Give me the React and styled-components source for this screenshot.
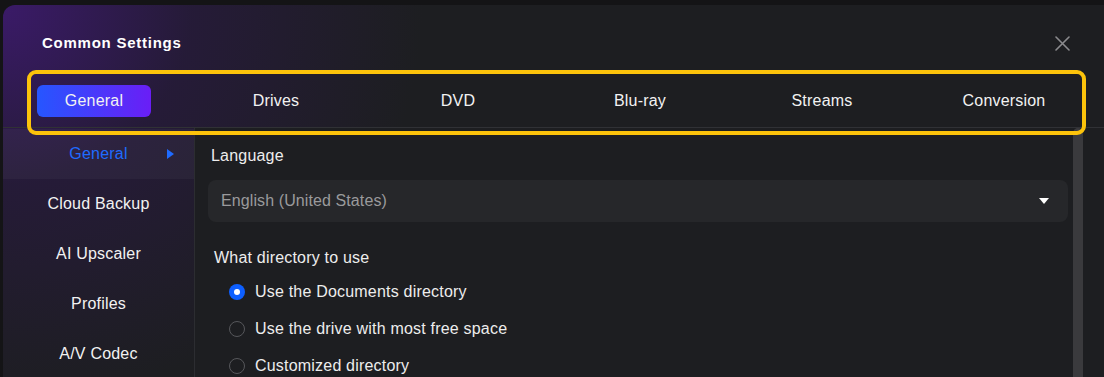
import React from 'react'
import styled, { createGlobalStyle } from 'styled-components'

const GlobalStyle = createGlobalStyle`
    html, body {
        margin: 0;
        padding: 0;
        background: #141416;
        overflow: hidden;
    }
    body {
        font-family: "Liberation Sans", Arial, sans-serif;
    }
`;

const Page = styled.div`
    position: relative;
    display: flex;
    height: 377px;
    padding: 5px 0 0 3px;
    box-sizing: border-box;
`;

const Dialog = styled.div`
    flex: 1;
    display: flex;
    flex-direction: column;
    border-radius: 12px 0 0 0;
    overflow: hidden;
    background-color: #1d1e21;
    background-image: radial-gradient(ellipse 420px 400px at 0% 0%, rgba(60, 26, 108, 0.95) 0%, rgba(44, 24, 74, 0.55) 45%, rgba(29, 30, 33, 0) 100%);
`;

const Header = styled.div`
    height: 69px;
    box-sizing: border-box;
    padding: 7px 34px 0 39px;
    display: flex;
    align-items: center;
    justify-content: space-between;
`;

const Title = styled.h1`
    margin: 0;
    font-size: 15px;
    line-height: 20px;
    font-weight: 700;
    letter-spacing: 0.75px;
    color: #ffffff;
`;

const CloseButton = styled.div`
    width: 15px;
    height: 15px;
    display: flex;
`;

const TabBar = styled.div`
    height: 53px;
    display: grid;
    grid-template-columns: repeat(6, 182px);
    align-items: center;
    border-bottom: 1px solid #303135;
`;

const Tab = styled.div`
    justify-self: center;
    width: 114px;
    height: 32px;
    border-radius: 6px;
    display: flex;
    align-items: center;
    justify-content: center;
    font-size: 16px;
    letter-spacing: 0.2px;
    color: #f2f2f2;
    background: ${p => p.active ? 'linear-gradient(90deg, #2656ff 0%, #6a1ef6 100%)' : 'transparent'};
`;

const Highlight = styled.div`
    position: absolute;
    left: 27px;
    top: 70px;
    width: 1059px;
    height: 65px;
    box-sizing: border-box;
    border: 4px solid #fcc30b;
    border-radius: 9px;
    pointer-events: none;
`;

const Body = styled.div`
    flex: 1;
    display: flex;
    min-height: 0;
`;

const Sidebar = styled.div`
    width: 191px;
    padding-top: 1px;
    border-right: 1px solid #2c2d31;
    display: flex;
    flex-direction: column;
`;

const SideItem = styled.div`
    position: relative;
    height: 50px;
    flex-shrink: 0;
    display: flex;
    align-items: center;
    justify-content: center;
    font-size: 16px;
    letter-spacing: 0.2px;
    color: ${p => p.active ? '#1f6bff' : '#f2f2f2'};
    background: ${p => p.active ? 'rgba(255, 255, 255, 0.035)' : 'transparent'};
`;

const SideArrow = styled.span`
    position: absolute;
    right: 20px;
    top: 20px;
    width: 0;
    height: 0;
    border-top: 5px solid transparent;
    border-bottom: 5px solid transparent;
    border-left: 7px solid #1f6bff;
`;

const Content = styled.div`
    flex: 1;
    display: flex;
    background: #1d1e21;
`;

const Panel = styled.div`
    flex: 1;
    padding: 19px 5px 0 13px;
    display: flex;
    flex-direction: column;
`;

const Label = styled.div`
    font-size: 16px;
    line-height: 18px;
    letter-spacing: 0.2px;
    color: #ededed;
    padding-left: ${p => p.indent || 3}px;
`;

const Select = styled.div`
    margin-top: 15px;
    height: 42px;
    border-radius: 8px;
    background: #26272a;
    display: flex;
    align-items: center;
    justify-content: space-between;
    padding: 0 19px 0 13px;
    font-size: 16px;
    letter-spacing: 0.1px;
    color: #9a9a9c;
`;

const Caret = styled.span`
    width: 0;
    height: 0;
    border-left: 5px solid transparent;
    border-right: 5px solid transparent;
    border-top: 6px solid #ffffff;
`;

const Section = styled.div`
    margin-top: 27px;
    display: flex;
    flex-direction: column;
`;

const RadioList = styled.div`
    margin-top: 16px;
    padding-left: 21px;
    display: flex;
    flex-direction: column;
    gap: 19px;
`;

const RadioRow = styled.label`
    display: flex;
    align-items: center;
    gap: 10px;
    font-size: 16px;
    line-height: 18px;
    letter-spacing: 0.2px;
    color: #ededed;
`;

const RadioDot = styled.span`
    width: 16px;
    height: 16px;
    box-sizing: border-box;
    border-radius: 50%;
    display: flex;
    align-items: center;
    justify-content: center;
    background: ${p => p.checked ? '#0d5fff' : 'transparent'};
    border: ${p => p.checked ? 'none' : '1.5px solid #56575b'};
    &::after {
        content: '';
        display: ${p => p.checked ? 'block' : 'none'};
        width: 6px;
        height: 6px;
        border-radius: 50%;
        background: #ffffff;
    }
`;

const Scrollbar = styled.div`
    width: 10px;
    margin-right: 21px;
    background: #3a3a3d;
    border-radius: 5px 5px 0 0;
`;

const tabs = ['General', 'Drives', 'DVD', 'Blu-ray', 'Streams', 'Conversion'];
const sideItems = ['General', 'Cloud Backup', 'AI Upscaler', 'Profiles', 'A/V Codec'];
const options = ['Use the Documents directory', 'Use the drive with most free space', 'Customized directory'];

function App () {
    return (
        <>
            <GlobalStyle />
            <Page>
                <Dialog>
                    <Header>
                        <Title>Common Settings</Title>
                        <CloseButton>
                            <svg width="15" height="15" viewBox="0 0 15 15">
                                <path d="M1 1L14 14M14 1L1 14" stroke="#8b8b8e" strokeWidth="1.6" strokeLinecap="round" />
                            </svg>
                        </CloseButton>
                    </Header>
                    <TabBar>
                        {tabs.map((t, i) => <Tab key={t} active={i === 0}>{t}</Tab>)}
                    </TabBar>
                    <Body>
                        <Sidebar>
                            {sideItems.map((s, i) => (
                                <SideItem key={s} active={i === 0}>
                                    {s}
                                    {i === 0 && <SideArrow />}
                                </SideItem>
                            ))}
                        </Sidebar>
                        <Content>
                            <Panel>
                                <Label>Language</Label>
                                <Select>
                                    English (United States)
                                    <Caret />
                                </Select>
                                <Section>
                                    <Label indent={6}>What directory to use</Label>
                                    <RadioList>
                                        {options.map((o, i) => (
                                            <RadioRow key={o}>
                                                <RadioDot checked={i === 0} />
                                                {o}
                                            </RadioRow>
                                        ))}
                                    </RadioList>
                                </Section>
                            </Panel>
                            <Scrollbar />
                        </Content>
                    </Body>
                </Dialog>
                <Highlight />
            </Page>
        </>
    )
}

export default App;
